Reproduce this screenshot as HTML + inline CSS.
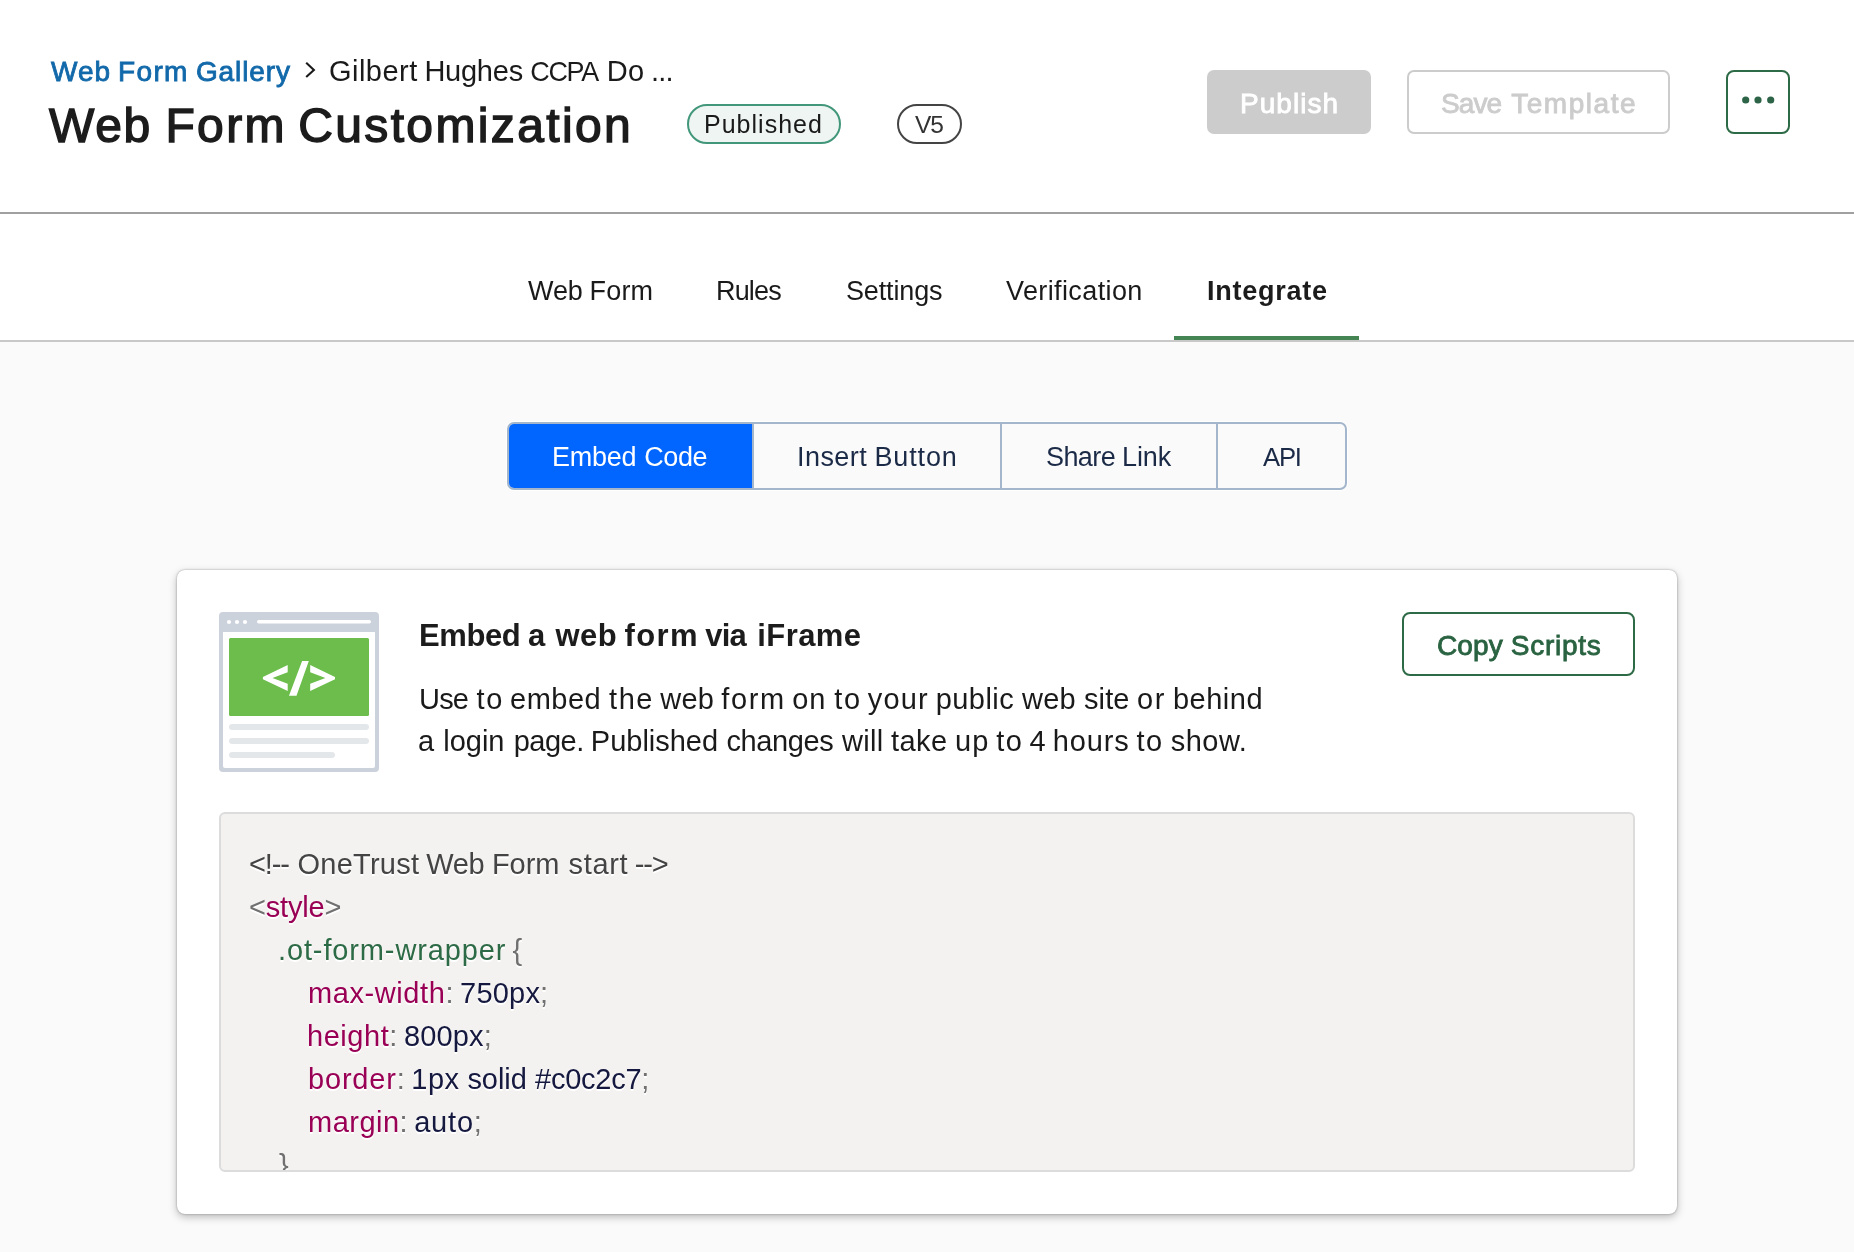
<!DOCTYPE html>
<html lang="en">
<head>
<meta charset="utf-8">
<title>Web Form Customization</title>
<style>
*{box-sizing:border-box;margin:0;padding:0}
html,body{width:1854px;height:1252px;overflow:hidden}
body{position:relative;background:#fafafa;font-family:"Liberation Sans",sans-serif;color:#222}
.t{position:absolute;white-space:pre;display:block;will-change:transform}
.abs{position:absolute}
pre,h1,h2,p{font:inherit}
.t i,.t b{font-style:normal;font-weight:inherit}
.hbg{position:absolute;left:0;top:0;width:1854px;height:214px;background:#fff;border-bottom:2px solid #a0a0a0}
.nbg{position:absolute;left:0;top:214px;width:1854px;height:128px;background:#fff;border-bottom:2px solid #c8c8c8}
.pill{position:absolute;top:104px;height:40px;border-radius:20px;border:2px solid}
.btn{position:absolute;top:70px;height:64px;border-radius:7px}
.seg{position:absolute;left:507px;top:422px;width:840px;height:68px;border:2px solid #a3b6cc;border-radius:7px;overflow:hidden;box-shadow:0 0 0 1px rgba(255,255,255,.85)}
.seg i{position:absolute;top:0;width:2px;height:64px;background:#a3b6cc}
.card{position:absolute;left:177px;top:570px;width:1500px;height:644px;background:#fff;border-radius:8px;box-shadow:0 0 2px rgba(0,0,0,.36),0 3px 8px rgba(0,0,0,.26)}
.code{position:absolute;left:219px;top:812px;width:1416px;height:360px;background:#f4f2f0;border:2px solid #dcdcdc;border-radius:6px;overflow:hidden}
</style>
</head>
<body>
<header>
  <div class="hbg"></div>
  <div class="breadcrumb">
    <span class="t" id="bc1" style="left:50.52px;top:53px;font-size:28.0px;line-height:37px;font-weight:400;color:#1269aa;-webkit-text-stroke:0.85px #1269aa;"><i style="letter-spacing:1.02px">Web</i><i style="letter-spacing:-0.85px"> </i><i style="letter-spacing:1.33px">Form</i><i style="letter-spacing:-0.63px"> </i><i style="letter-spacing:0.92px">Gallery</i></span>
    <svg class="abs" style="left:300px;top:58px" width="20" height="26" viewBox="0 0 20 26"><path d="M6.2 4.8 L13.9 11.9 L6.2 19" fill="none" stroke="#1a1a1a" stroke-width="2.1"/></svg>
    <span class="t" id="bc2" style="left:328.50px;top:52px;font-size:29.0px;line-height:38px;font-weight:400;color:#1a1a1a;"><i style="letter-spacing:0.47px">Gilbert</i><i style="letter-spacing:-1.40px"> </i><i style="letter-spacing:-0.24px">Hughes</i><i style="letter-spacing:-0.69px"> </i><i style="font-size:26.95px;letter-spacing:-1.30px">CCPA</i><i style="letter-spacing:0.78px"> </i><i style="letter-spacing:0.14px">Do</i><i style="letter-spacing:-1.28px"> </i><i style="letter-spacing:-0.76px">...</i></span>
  </div>
  <h1><span class="t" id="title" style="left:49.00px;top:96px;font-size:48.0px;line-height:59px;font-weight:400;color:#1c1c1c;-webkit-text-stroke:1.4px #1c1c1c;"><i style="letter-spacing:1.74px">Web</i><i style="letter-spacing:-0.02px"> </i><i style="letter-spacing:2.39px">Form</i><i style="letter-spacing:-2.04px"> </i><i style="letter-spacing:2.36px">Customization</i></span></h1>
  <div class="pill" style="left:687px;width:154px;border-color:#42977a;background:#eef5f3"></div><span class="t" id="pub" style="left:704.20px;top:107px;font-size:25.0px;line-height:34px;font-weight:400;color:#1a1a1a;"><i style="letter-spacing:1.01px">Published</i></span>
  <div class="pill" style="left:897px;width:65px;border-color:#444;background:#fff"></div><span class="t" id="v5" style="left:915.00px;top:107px;font-size:25.0px;line-height:34px;font-weight:400;color:#333;"><i style="font-size:24.54px;letter-spacing:-1.12px">V5</i></span>
  <div class="btn" style="left:1207px;width:164px;background:#ccc"></div><span class="t" id="bpub" style="left:1239.72px;top:85px;font-size:28.0px;line-height:37px;font-weight:400;color:#fff;-webkit-text-stroke:0.85px #fff;"><i style="letter-spacing:1.05px">Publish</i></span>
  <div class="btn" style="left:1407px;width:263px;border:2px solid #ccc;background:#fff"></div><span class="t" id="bsave" style="left:1440.62px;top:85px;font-size:28.0px;line-height:37px;font-weight:400;color:#ccc;-webkit-text-stroke:0.85px #ccc;"><i style="letter-spacing:-0.93px">Save</i><i style="letter-spacing:2.27px"> </i><i style="letter-spacing:1.54px">Template</i></span>
  <div class="btn" style="left:1726px;width:64px;border:2px solid #2d6b46;background:#fff;border-radius:8px">
    <svg class="abs" style="left:0;top:0" width="60" height="60" viewBox="0 0 60 60"><g fill="#2d6447"><circle cx="17.7" cy="28" r="3.6"/><circle cx="30" cy="28" r="3.6"/><circle cx="42.7" cy="28" r="3.6"/></g></svg>
  </div>
</header>
<nav>
  <div class="nbg"></div>
  <span class="t" id="tab1" style="left:527.50px;top:273px;font-size:27.0px;line-height:36px;font-weight:400;color:#1a1a1a;"><i style="letter-spacing:-0.08px">Web</i><i style="letter-spacing:-0.73px"> </i><i style="letter-spacing:0.15px">Form</i></span><span class="t" id="tab2" style="left:715.50px;top:273px;font-size:27.0px;line-height:36px;font-weight:400;color:#1a1a1a;"><i style="letter-spacing:-0.83px">Rules</i></span><span class="t" id="tab3" style="left:845.70px;top:273px;font-size:27.0px;line-height:36px;font-weight:400;color:#1a1a1a;"><i style="letter-spacing:-0.15px">Settings</i></span><span class="t" id="tab4" style="left:1005.70px;top:273px;font-size:27.0px;line-height:36px;font-weight:400;color:#1a1a1a;"><i style="letter-spacing:0.39px">Verification</i></span><span class="t" id="tab5" style="left:1206.50px;top:273px;font-size:27.0px;line-height:36px;font-weight:700;color:#1c1c1c;"><i style="letter-spacing:0.75px">Integrate</i></span>
  <div class="abs" style="left:1174px;top:336px;width:185px;height:4px;background:#458453"></div>
</nav>
<main>
  <div class="seg">
    <div class="abs" style="left:0;top:0;width:243px;height:64px;background:#0066ff"></div>
    <i style="left:243px"></i><i style="left:491px"></i><i style="left:707px"></i>
  </div>
  <span class="t" id="seg1" style="left:552.00px;top:439px;font-size:27.0px;line-height:36px;font-weight:400;color:#fff;"><i style="letter-spacing:-0.26px">Embed</i><i style="letter-spacing:0.46px"> </i><i style="letter-spacing:-0.42px">Code</i></span><span class="t" id="seg2" style="left:796.70px;top:439px;font-size:27.0px;line-height:36px;font-weight:400;color:#1b2a47;"><i style="letter-spacing:0.45px">Insert</i><i style="letter-spacing:-0.37px"> </i><i style="letter-spacing:0.88px">Button</i></span><span class="t" id="seg3" style="left:1046.00px;top:439px;font-size:27.0px;line-height:36px;font-weight:400;color:#1b2a47;"><i style="letter-spacing:-0.58px">Share</i><i style="letter-spacing:-0.66px"> </i><i style="letter-spacing:-0.11px">Link</i></span><span class="t" id="seg4" style="left:1263.00px;top:439px;font-size:27.0px;line-height:36px;font-weight:400;color:#1b2a47;"><i style="font-size:25.66px;letter-spacing:-1.21px">API</i></span>
  <section class="card"></section>
  <svg class="abs" style="left:219px;top:612px" width="160" height="160" viewBox="0 0 160 160">
    <rect x="0" y="0" width="160" height="160" rx="4" fill="#ccd2dc"/>
    <rect x="4" y="20" width="152" height="136" rx="2" fill="#fff"/>
    <rect x="4" y="20" width="152" height="6" fill="#fff"/>
    <circle cx="10" cy="10" r="2.1" fill="#fff"/><circle cx="18" cy="10" r="2.1" fill="#fff"/><circle cx="26" cy="10" r="2.1" fill="#fff"/>
    <rect x="38" y="8" width="114" height="3.4" rx="1.7" fill="#fff"/>
    <rect x="10" y="26" width="140" height="78" rx="1.5" fill="#6cbd4b"/>
    <path d="M68.7 53 L43.9 64.9 L43.9 67.3 L68.7 78.9 L68.7 71.7 L53.5 66.1 L68.7 60.2 Z M91.2 53 L116 64.9 L116 67.3 L91.2 78.9 L91.2 71.7 L106.4 66.1 L91.2 60.2 Z M83.1 49 L89.8 49 L77.5 83.7 L70 83.7 Z" fill="#fff"/>
    <rect x="10" y="112" width="140" height="6" rx="3" fill="#e4e7e9"/>
    <rect x="10" y="126" width="140" height="6" rx="3" fill="#e4e7e9"/>
    <rect x="10" y="140" width="106" height="6" rx="3" fill="#e4e7e9"/>
  </svg>
  <h2><span class="t" id="h2" style="left:419.20px;top:615px;font-size:31.0px;line-height:41px;font-weight:700;color:#1c1c1c;"><i style="letter-spacing:-0.42px">Embed</i><i style="letter-spacing:-0.89px"> </i><i style="letter-spacing:0.00px">a</i><i style="letter-spacing:1.52px"> </i><i style="letter-spacing:0.45px">web</i><i style="letter-spacing:-1.24px"> </i><i style="letter-spacing:1.44px">form</i><i style="letter-spacing:-2.39px"> </i><i style="letter-spacing:-0.87px">via</i><i style="letter-spacing:2.90px"> </i><i style="letter-spacing:0.43px">iFrame</i></span></h2>
  <p><span class="t" id="p1" style="left:418.70px;top:680px;font-size:29.0px;line-height:38px;font-weight:400;color:#1a1a1a;"><i style="letter-spacing:-0.81px">Use</i><i style="letter-spacing:0.31px"> </i><i style="letter-spacing:1.59px">to</i><i style="letter-spacing:-1.97px"> </i><i style="letter-spacing:0.52px">embed</i><i style="letter-spacing:-0.29px"> </i><i style="letter-spacing:1.51px">the</i><i style="letter-spacing:-1.69px"> </i><i style="letter-spacing:0.21px">web</i><i style="letter-spacing:-0.90px"> </i><i style="letter-spacing:1.59px">form</i><i style="letter-spacing:-1.51px"> </i><i style="letter-spacing:0.76px">on</i><i style="letter-spacing:0.20px"> </i><i style="letter-spacing:1.59px">to</i><i style="letter-spacing:-1.97px"> </i><i style="letter-spacing:1.12px">your</i><i style="letter-spacing:-1.11px"> </i><i style="letter-spacing:0.48px">public</i><i style="letter-spacing:-0.34px"> </i><i style="letter-spacing:0.21px">web</i><i style="letter-spacing:0.02px"> </i><i style="letter-spacing:0.15px">site</i><i style="letter-spacing:-0.75px"> </i><i style="letter-spacing:1.59px">or</i><i style="letter-spacing:-1.00px"> </i><i style="letter-spacing:0.49px">behind</i></span><span class="t" id="p2" style="left:418.18px;top:722px;font-size:29.0px;line-height:38px;font-weight:400;color:#1a1a1a;"><i style="letter-spacing:0.00px">a</i><i style="letter-spacing:1.10px"> </i><i style="letter-spacing:-0.03px">login</i><i style="letter-spacing:1.26px"> </i><i style="letter-spacing:-0.52px">page.</i><i style="letter-spacing:-0.99px"> </i><i style="letter-spacing:-0.01px">Published</i><i style="letter-spacing:0.20px"> </i><i style="letter-spacing:-0.37px">changes</i><i style="letter-spacing:0.40px"> </i><i style="letter-spacing:0.30px">will</i><i style="letter-spacing:-0.48px"> </i><i style="letter-spacing:0.47px">take</i><i style="letter-spacing:-0.69px"> </i><i style="letter-spacing:0.96px">up</i><i style="letter-spacing:-1.13px"> </i><i style="letter-spacing:1.59px">to</i><i style="letter-spacing:-2.08px"> </i><i style="letter-spacing:0.00px">4</i><i style="letter-spacing:-0.95px"> </i><i style="letter-spacing:0.85px">hours</i><i style="letter-spacing:-1.18px"> </i><i style="letter-spacing:1.59px">to</i><i style="letter-spacing:-1.06px"> </i><i style="letter-spacing:0.44px">show.</i></span></p>
  <div class="abs" style="left:1402px;top:612px;width:233px;height:64px;border:2px solid #2d6b46;border-radius:8px;background:#fff"></div><span class="t" id="copy" style="left:1436.72px;top:627px;font-size:28.0px;line-height:37px;font-weight:400;color:#2a6341;-webkit-text-stroke:0.85px #2a6341;"><i style="letter-spacing:0.15px">Copy</i><i style="letter-spacing:0.11px"> </i><i style="letter-spacing:0.74px">Scripts</i></span>
  <div class="code"></div>
  <div class="abs" style="left:219px;top:812px;width:1416px;height:358px;overflow:hidden">
    <div class="abs" style="left:-219px;top:-812px;width:1854px;height:1252px">
      <pre><span class="t" id="c1" style="left:249.00px;top:845px;font-size:29.0px;line-height:38px;font-weight:400;color:#444;text-shadow:0 2px #fff;"><i style="letter-spacing:-1.14px"><b style="color:#444">&lt;!--</b></i><i style="letter-spacing:0.66px"> </i><i style="letter-spacing:0.25px"><b style="color:#444">OneTrust</b></i><i style="letter-spacing:-1.15px"> </i><i style="letter-spacing:-0.33px"><b style="color:#444">Web</b></i><i style="letter-spacing:-0.50px"> </i><i style="letter-spacing:-0.02px"><b style="color:#444">Form</b></i><i style="letter-spacing:0.95px"> </i><i style="letter-spacing:0.68px"><b style="color:#444">start</b></i><i style="letter-spacing:-1.58px"> </i><i style="letter-spacing:-1.22px"><b style="color:#444">--&gt;</b></i></span><span class="t" id="c2" style="left:249.00px;top:888px;font-size:29.0px;line-height:38px;font-weight:400;color:#444;text-shadow:0 2px #fff;"><i style="letter-spacing:-0.19px"><b style="color:#707070">&lt;</b><b style="color:#990055">style</b><b style="color:#707070">&gt;</b></i></span><span class="t" id="c3" style="left:277.50px;top:931px;font-size:29.0px;line-height:38px;font-weight:400;color:#444;text-shadow:0 2px #fff;"><i style="letter-spacing:0.87px"><b style="color:#2d6b46">.ot-form-wrapper</b></i><i style="letter-spacing:-1.80px"> </i><i style="letter-spacing:0.00px"><b style="color:#707070">{</b></i></span><span class="t" id="c4" style="left:308.20px;top:974px;font-size:29.0px;line-height:38px;font-weight:400;color:#444;text-shadow:0 2px #fff;"><i style="letter-spacing:0.59px"><b style="color:#990055">max-width</b><b style="color:#707070">:</b></i><i style="letter-spacing:-2.06px"> </i><i style="letter-spacing:0.19px"><b style="color:#15193f">750px</b><b style="color:#707070">;</b></i></span><span class="t" id="c5" style="left:307.20px;top:1017px;font-size:29.0px;line-height:38px;font-weight:400;color:#444;text-shadow:0 2px #fff;"><i style="letter-spacing:0.55px"><b style="color:#990055">height</b><b style="color:#707070">:</b></i><i style="letter-spacing:-2.04px"> </i><i style="letter-spacing:0.16px"><b style="color:#15193f">800px</b><b style="color:#707070">;</b></i></span><span class="t" id="c6" style="left:308.20px;top:1060px;font-size:29.0px;line-height:38px;font-weight:400;color:#444;text-shadow:0 2px #fff;"><i style="letter-spacing:0.81px"><b style="color:#990055">border</b><b style="color:#707070">:</b></i><i style="letter-spacing:-2.30px"> </i><i style="letter-spacing:0.43px"><b style="color:#15193f">1px</b></i><i style="letter-spacing:-0.06px"> </i><i style="letter-spacing:-0.06px"><b style="color:#15193f">solid</b></i><i style="letter-spacing:0.27px"> </i><i style="letter-spacing:-0.25px"><b style="color:#15193f">#c0c2c7</b><b style="color:#707070">;</b></i></span><span class="t" id="c7" style="left:308.20px;top:1103px;font-size:29.0px;line-height:38px;font-weight:400;color:#444;text-shadow:0 2px #fff;"><i style="letter-spacing:0.48px"><b style="color:#990055">margin</b><b style="color:#707070">:</b></i><i style="letter-spacing:-1.95px"> </i><i style="letter-spacing:0.80px"><b style="color:#15193f">auto</b><b style="color:#707070">;</b></i></span><span class="t" id="c8" style="left:278.75px;top:1146px;font-size:29.0px;line-height:38px;font-weight:400;color:#444;text-shadow:0 2px #fff;"><i style="letter-spacing:0.00px"><b style="color:#707070">}</b></i></span></pre>
    </div>
  </div>
</main>
</body>
</html>
